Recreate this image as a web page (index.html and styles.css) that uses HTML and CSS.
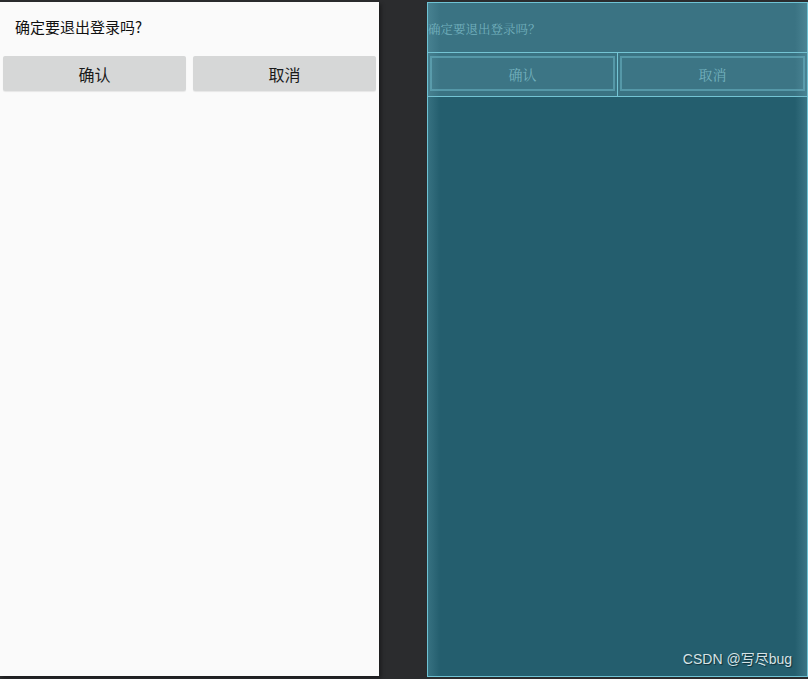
FILE: index.html
```html
<!DOCTYPE html>
<html>
<head>
<meta charset="utf-8">
<link rel="stylesheet" href="styles.css">
</head>
<body>
<div class="stage">
  <div class="phone">
    <div class="title">确定要退出登录吗?</div>
    <div class="btns">
      <div class="btn">确认</div>
      <div class="btn">取消</div>
    </div>
  </div>
  <div class="blue">
    <div class="bhead">
      <div class="btitle">确定要退出登录吗？</div>
      <div class="bbtns">
        <div class="bbtn"><span>确认</span></div>
        <div class="bbtn"><span>取消</span></div>
      </div>
    </div>
    <div class="bbody"></div>
    <div class="edge-l"></div>
    <div class="edge-r"></div>
    <div class="mark">CSDN @写尽bug</div>
  </div>
</div>
</body>
</html>
```
FILE: styles.css
```css
html, body { margin: 0; padding: 0; }
body {
  background: #2b2c2e;
  width: 808px;
  height: 679px;
  overflow: hidden;
  font-family: "Noto Sans CJK SC", "Noto Sans", sans-serif;
}
.stage {
  display: flex;
  padding-top: 2px;
  height: 674px;
}
.phone {
  width: 379px;
  height: 674px;
  background: #fafafa;
  box-shadow: 2px 2px 4px rgba(0,0,0,0.4);
}
.title {
  font-size: 15px;
  color: #111;
  padding: 15px 0 0 15px;
  height: 24px;
  line-height: 20px;
}
.btns {
  display: flex;
  gap: 7px;
  padding: 15px 3px 0 3px;
}
.btn {
  width: 183px;
  height: 35px;
  background: #d6d7d7;
  border-radius: 2px;
  box-shadow: 0 1px 1px rgba(0,0,0,0.08);
  font-size: 16px;
  color: #1a1a1a;
  display: flex;
  align-items: center;
  justify-content: center;
}
.blue {
  position: relative;
  margin-left: 48px;
  width: 379px;
  height: 673px;
  border: 1px solid #6fc3d4;
  background: #245e6e;
  font-family: "Noto Serif CJK SC", "Noto Sans CJK SC", serif;
}
.bhead {
  background: #3a7383;
  height: 93px;
  border-bottom: 1px solid #74c4d4;
}
.btitle {
  font-size: 12.5px;
  color: #72b0bd;
  height: 49px;
  line-height: 52px;
  border-bottom: 1px solid #74c4d4;
}
.bbtns {
  display: flex;
  height: 43px;
}
.bbtn {
  flex: 1;
  display: flex;
  padding: 3px 2px 5px 2px;
}
.bbtn + .bbtn { border-left: 1px solid #74c4d4; }
.bbtn span {
  flex: 1;
  border: 2px solid #5598a8;
  background: #3c7585;
  color: #72b0bd;
  font-size: 14px;
  display: flex;
  align-items: center;
  justify-content: center;
}
.edge-l, .edge-r {
  position: absolute;
  top: 0;
  bottom: 0;
  width: 12px;
}
.edge-l { left: 0; background: linear-gradient(to right, rgba(110,170,185,0.25), rgba(110,170,185,0)); }
.edge-r { right: 0; background: linear-gradient(to left, rgba(110,170,185,0.3), rgba(110,170,185,0)); }
.mark {
  position: absolute;
  right: 15px;
  bottom: 8px;
  font-family: "Liberation Sans", "Noto Sans CJK SC", sans-serif;
  font-size: 14px;
  color: #d5e3e6;
  text-shadow: 1px 1px 1px rgba(0,0,0,0.5);
}
```
